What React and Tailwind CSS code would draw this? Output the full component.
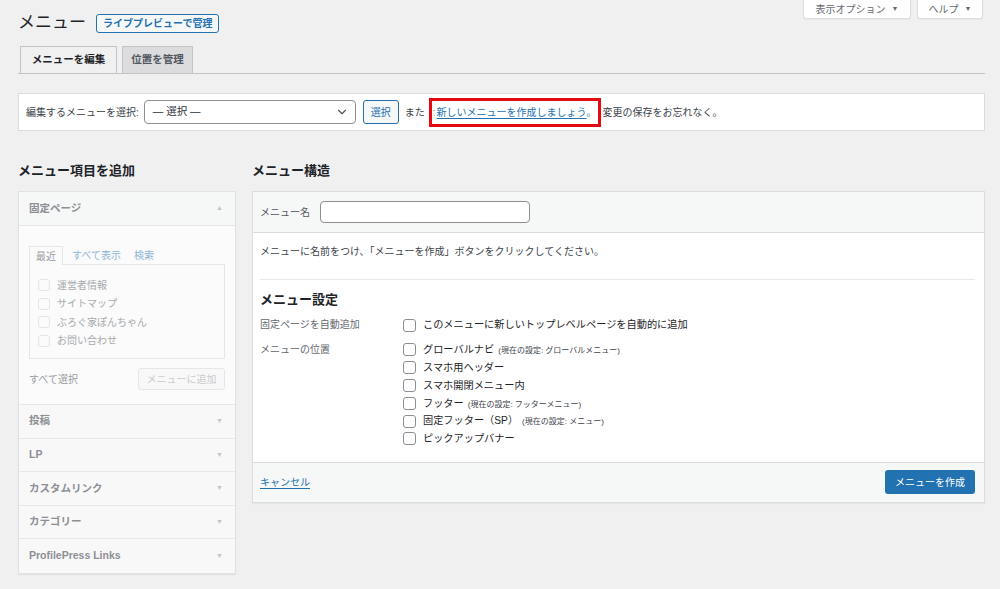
import { ChevronDown } from 'lucide-react';

const font = { fontFamily: '"Liberation Sans", "Noto Sans CJK JP", sans-serif' };

const sections = ['投稿', 'LP', 'カスタムリンク', 'カテゴリー', 'ProfilePress Links'];
const pages = ['運営者情報', 'サイトマップ', 'ぶろぐ家ぽんちゃん', 'お問い合わせ'];
const locations = [
  { label: 'グローバルナビ', note: '(現在の設定: グローバルメニュー)' },
  { label: 'スマホ用ヘッダー' },
  { label: 'スマホ開閉メニュー内' },
  { label: 'フッター', note: '(現在の設定: フッターメニュー)' },
  { label: '固定フッター（SP）', note: '(現在の設定: メニュー)' },
  { label: 'ピックアップバナー' },
];

function Checkbox({ faded }) {
  return (
    <span
      className={
        faded
          ? 'w-[12px] h-[12px] rounded-[3px] border border-[#e4e4e4] bg-[#fbfbfb] shrink-0'
          : 'w-[13px] h-[13px] rounded-[3px] border border-[#8c8f94] bg-white shrink-0'
      }
    />
  );
}

export default function App() {
  return (
    <div style={font} className="min-h-[589px] bg-[#f0f0f1] pl-[18px] pr-[15px] text-[#3c434a] text-[10px]">
      {/* Title row */}
      <div className="flex justify-between items-start">
        <div className="flex items-center pt-[12px]">
          <h1 className="text-[17px] leading-[22px] text-[#1d2327]">メニュー</h1>
          <span className="ml-[10px] h-[19px] px-[6px] flex items-center border border-[#2271b1] rounded-[3px] bg-[#f6f7f7] text-[#2271b1] text-[10px] font-semibold">
            ライブプレビューで管理
          </span>
        </div>
        <div className="flex gap-[6px] mr-[2px]">
          <span className="w-[108px] h-[19px] flex items-center justify-center gap-[6px] bg-white border border-t-0 border-[#dcdcde] rounded-b-[3px] shadow-[0_1px_1px_rgba(0,0,0,0.04)] text-[#646970]">
            表示オプション <span className="text-[7px]">▼</span>
          </span>
          <span className="w-[66px] h-[19px] flex items-center justify-center gap-[6px] bg-white border border-t-0 border-[#dcdcde] rounded-b-[3px] shadow-[0_1px_1px_rgba(0,0,0,0.04)] text-[#646970]">
            ヘルプ <span className="text-[7px]">▼</span>
          </span>
        </div>
      </div>

      {/* Tabs */}
      <div className="mt-[12px] flex gap-[5px] pl-[2px] border-b border-[#c3c4c7]">
        <span className="w-[97px] h-[27px] -mb-px flex items-center justify-center border border-b-0 border-[#c3c4c7] bg-[#f0f0f1] text-[#1d2327] text-[10.5px] font-semibold">
          メニューを編集
        </span>
        <span className="w-[71px] h-[27px] flex items-center justify-center border border-b-0 border-[#c3c4c7] bg-[#dcdcde] text-[#50575e] text-[10.5px] font-semibold">
          位置を管理
        </span>
      </div>

      {/* Manage menus */}
      <div className="mt-[19px] h-[38px] bg-white border border-[#dcdcde] px-[7px] flex items-center whitespace-nowrap">
        <span>編集するメニューを選択:</span>
        <div className="ml-[5px] w-[212px] h-[24px] border border-[#8c8f94] rounded-[4px] bg-white flex items-center justify-between pl-[8px] pr-[6px] text-[10.5px] text-[#2c3338]">
          <span>— 選択 —</span>
          <ChevronDown size={14} strokeWidth={2} className="text-[#50575e]" />
        </div>
        <span className="ml-[7px] w-[36px] h-[24px] flex items-center justify-center border border-[#2271b1] rounded-[3px] bg-[#f6f7f7] text-[#2271b1]">
          選択
        </span>
        <span className="ml-[6px]">また</span>
        <span className="ml-[4px] h-[29px] border-[3px] border-[#e50914] flex items-center pl-[1px] pr-[1px] shrink-0">
          <span className="text-[#8c8f94] mr-[1px]">:</span>
          <span className="text-[#2271b1] underline underline-offset-2">新しいメニューを作成しましょう</span>
          <span className="text-[#2271b1]">。</span>
        </span>
        <span className="ml-[2px]">変更の保存をお忘れなく。</span>
      </div>

      {/* Columns */}
      <div className="mt-[30px] flex gap-[16px] items-start">
        {/* Left column */}
        <div className="w-[218px] shrink-0">
          <h2 className="text-[13px] leading-[20px] font-bold text-[#1d2327] mb-[10px]">メニュー項目を追加</h2>
          <div className="border border-[#e2e2e4] bg-[#f8f8f8] shadow-[0_1px_1px_rgba(0,0,0,0.06)]">
            <div className="h-[34px] px-[10px] flex items-center justify-between bg-[#f6f7f7] border-b border-[#e8e8ea]">
              <span className="text-[10.5px] font-semibold text-[#8c8f94]">固定ページ</span>
              <span className="text-[7px] text-[#c3c4c7] mr-[2px]">▲</span>
            </div>
            <div className="bg-[#fbfbfb] px-[10px] pt-[20px] pb-[14px] border-b border-[#e8e8ea]">
              <div className="flex items-end h-[18px]">
                <span className="h-[19px] -mb-px px-[6px] flex items-center border border-b-0 border-[#e6e6e6] bg-[#fbfbfb] text-[#9a9c9f]">
                  最近
                </span>
                <span className="ml-[9px] h-[18px] flex items-center text-[#8fb6d6]">すべて表示</span>
                <span className="ml-[13px] h-[18px] flex items-center text-[#8fb6d6]">検索</span>
              </div>
              <div className="h-[95px] border border-[#e6e6e6] pt-[11px] pl-[8px]">
                {pages.map((p) => (
                  <div key={p} className="h-[18.5px] flex items-center gap-[7px] text-[#a7aaad]">
                    <Checkbox faded />
                    <span>{p}</span>
                  </div>
                ))}
              </div>
              <div className="mt-[9px] h-[22px] flex items-center justify-between">
                <span className="text-[#9a9c9f]">すべて選択</span>
                <span className="w-[87px] h-[22px] flex items-center justify-center border border-[#e6e6e6] rounded-[3px] bg-[#f8f8f8] text-[#c9cacc]">
                  メニューに追加
                </span>
              </div>
            </div>
            {sections.map((s, i) => (
              <div
                key={s}
                className={
                  'h-[33.6px] px-[10px] flex items-center justify-between bg-[#f8f8f8]' +
                  (i < sections.length - 1 ? ' border-b border-[#e8e8ea]' : '')
                }
              >
                <span className="text-[10.5px] font-semibold text-[#8c8f94]">{s}</span>
                <span className="text-[7px] text-[#c3c4c7] mr-[2px]">▼</span>
              </div>
            ))}
          </div>
        </div>

        {/* Right column */}
        <div className="flex-1">
          <h2 className="text-[13px] leading-[20px] font-bold text-[#1d2327] mb-[10px]">メニュー構造</h2>
          <div className="border border-[#dcdcde] bg-white shadow-[0_1px_1px_rgba(0,0,0,0.04)]">
            <div className="h-[41px] pl-[7px] flex items-center bg-[#f6f7f7] border-b border-[#dcdcde]">
              <span className="text-[#50575e]">メニュー名</span>
              <span className="ml-[10px] w-[210px] h-[22px] border border-[#8c8f94] rounded-[4px] bg-white" />
            </div>
            <div className="pl-[7px] pr-[9px] pt-[12px] pb-[14px]">
              <p className="leading-[14px] text-[#3c434a]">メニューに名前をつけ、「メニューを作成」ボタンをクリックしてください。</p>
              <div className="mt-[20px] border-t border-[#e8e8ea]" />
              <h3 className="mt-[10px] text-[13px] leading-[20px] font-bold text-[#1d2327]">メニュー設定</h3>
              <div className="mt-[6px] flex">
                <span className="w-[143px] shrink-0 leading-[18px] text-[#646970]">固定ページを自動追加</span>
                <div className="h-[18px] flex items-center gap-[7px] text-[10.2px] text-[#1d2327]">
                  <Checkbox />
                  <span>このメニューに新しいトップレベルページを自動的に追加</span>
                </div>
              </div>
              <div className="mt-[7px] flex">
                <span className="w-[143px] shrink-0 leading-[18px] text-[#646970]">メニューの位置</span>
                <div>
                  {locations.map((l) => (
                    <div key={l.label} className="h-[17.8px] flex items-center gap-[7px] text-[10.2px] text-[#1d2327]">
                      <Checkbox />
                      <span>
                        {l.label}
                        {l.note && <span className="ml-[4px] text-[8px] text-[#3c434a]">{l.note}</span>}
                      </span>
                    </div>
                  ))}
                </div>
              </div>
            </div>
            <div className="h-[40px] pl-[7px] pr-[9px] flex items-center justify-between bg-[#f6f7f7] border-t border-[#dcdcde]">
              <span className="text-[#2271b1] underline underline-offset-2">キャンセル</span>
              <span className="w-[90px] h-[24px] flex items-center justify-center rounded-[3px] bg-[#2271b1] text-white">
                メニューを作成
              </span>
            </div>
          </div>
        </div>
      </div>
    </div>
  );
}
